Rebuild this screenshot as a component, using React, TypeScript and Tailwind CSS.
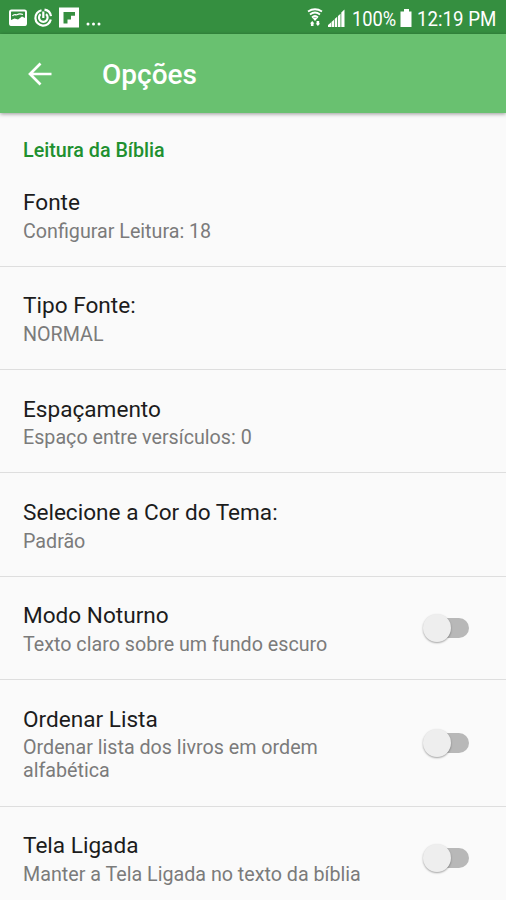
function StatusBar() {
  return (
    <div className="flex h-[34px] items-center bg-[#358f40] text-white">
      <svg width="110" height="34" viewBox="0 0 110 34" fill="none" className="shrink-0">
        <rect x="10" y="10.500" width="16" height="14.500" rx="1.500" stroke="#fff" strokeWidth="2" />
        <path d="M10 20.500l4.500-2 3.500 1 4-3 4 2v7H10z" fill="#fff" />
        <path d="M12.500 16c1.500-2.500 3.500-.5 5-1.500 1.500-1 3-1 5.500 0" stroke="#fff" strokeWidth="1.300" />
        <path d="M41.500 10.200a7.800 7.800 0 1 0 9.300 9.300M44.500 9.700a7.800 7.800 0 0 1 6.500 6.500" stroke="#fff" strokeWidth="2.200" />
        <path d="M40.600 14.200a4.300 4.300 0 1 0 5.400 0M43.300 11.500v6.500" stroke="#fff" strokeWidth="2.200" />
        <path fillRule="evenodd" d="M59 7.500h20V27.500H59zM63.500 12v11.500h4V19.500h3.500v-3.700h4V12z" fill="#fff" />
        <circle cx="88" cy="24" r="1.500" fill="#fff" />
        <circle cx="93.500" cy="24" r="1.500" fill="#fff" />
        <circle cx="99" cy="24" r="1.500" fill="#fff" />
      </svg>
      <svg width="52" height="34" viewBox="0 0 52 34" fill="none" className="ml-auto shrink-0">
        <g stroke="#fff" strokeWidth="1.800">
          <path d="M5 11.500q7-4.500 14 0M7 14.500q5-4 10 0M9 17.500q3-3 6 0" />
        </g>
        <path d="M9 17.500h6L12 21z" fill="#fff" />
        <path d="M7 23.500l2.200-2.500 2.200 2.500h-.9V26h-2.600v-2.500zM12.700 23.500h.9V21h2.600v2.500h.9L14.900 26z" fill="#fff" />
        <path d="M25 27v-2l3-2.500V27zM28.500 27v-5l2.500-2.200V27zM31.700 27v-8l2.500-2.200V27zM35 27V16l2.500-2.200V27zM38.300 27V12.500l3.200-3V27z" fill="#fff" />
      </svg>
      <span className="-ml-[3px] w-[48px] shrink-0 pt-[4px] text-[21px] leading-[24px] whitespace-nowrap">
        <span className="inline-block origin-left scale-x-[0.87]">100%</span>
      </span>
      <svg width="13" height="34" viewBox="0 0 13 34" className="shrink-0">
        <path d="M4 9h5v2.500h2.500V27h-11V11.500H4z" fill="#fff" />
      </svg>
      <span className="ml-[4px] w-[89px] shrink-0 pt-[4px] text-[21px] leading-[24px] whitespace-nowrap">
        <span className="inline-block origin-left scale-x-[0.89]">12:19 PM</span>
      </span>
    </div>
  );
}

function Toggle() {
  return (
    <span className="mr-[37px] flex h-[28px] w-[46px] shrink-0 items-center">
      <span className="z-10 h-[28px] w-[28px] rounded-full bg-[#eeeeee] shadow-[0_1px_2px_rgba(0,0,0,0.35)]" />
      <span className="-ml-[20px] h-[20px] w-[38px] rounded-full bg-[#b8b8b8]" />
    </span>
  );
}

type Option = {
  title: string;
  summary: string;
  height: string;
  spacing?: string;
  toggle?: boolean;
};

const options: Option[] = [
  { title: "Fonte", summary: "Configurar Leitura: 18", height: "h-[103px]" },
  { title: "Tipo Fonte:", summary: "NORMAL", height: "h-[103px]" },
  { title: "Espaçamento", summary: "Espaço entre versículos: 0", height: "h-[103px]", spacing: "pt-[26px] gap-[2px]" },
  { title: "Selecione a Cor do Tema:", summary: "Padrão", height: "h-[104px]", spacing: "pt-[26px] gap-[3px]" },
  { title: "Modo Noturno", summary: "Texto claro sobre um fundo escuro", height: "h-[103px]", toggle: true },
  { title: "Ordenar Lista", summary: "Ordenar lista dos livros em ordem alfabética", height: "h-[127px]", spacing: "pt-[26px] gap-[2px]", toggle: true },
  { title: "Tela Ligada", summary: "Manter a Tela Ligada no texto da bíblia", height: "h-[103px]", toggle: true },
];

function Row({ title, summary, height, spacing = "pt-[25px] gap-[3px]", toggle }: Option) {
  return (
    <div className={`flex shrink-0 items-center border-b border-[#dedede] ${height}`}>
      <div className={`flex h-full w-[376px] flex-col pl-[23px] ${spacing}`}>
        <div className="text-[22.6px] leading-[28px] whitespace-nowrap text-[#1c1c1c]">{title}</div>
        <div className="text-[19.7px] leading-[23px] text-[#7b7b7b]">{summary}</div>
      </div>
      {toggle && (
        <div className="ml-auto">
          <Toggle />
        </div>
      )}
    </div>
  );
}

export default function App() {
  return (
    <div className="flex h-[900px] w-[506px] flex-col overflow-hidden bg-[#fafafa] font-['Roboto',sans-serif]">
      <StatusBar />
      <header className="z-10 flex h-[79px] shrink-0 items-center bg-[#69c170] text-white shadow-[0_1px_4px_rgba(0,0,0,0.4)]">
        <svg width="24" height="24" viewBox="0 0 24 24" fill="none" className="ml-[28px]">
          <path d="M12.500 1.500L2 12l10.500 10.500M2 12h21.500" stroke="#fff" strokeWidth="2.700" />
        </svg>
        <h1 className="ml-[50px] pt-[3px] text-[28px] font-medium">Opções</h1>
      </header>
      <div className="h-[51px] shrink-0 pt-[26px] pl-[23px] text-[19.7px] leading-[24px] font-medium text-[#20902f]">
        Leitura da Bíblia
      </div>
      {options.map((option) => (
        <Row key={option.title} {...option} />
      ))}
    </div>
  );
}
